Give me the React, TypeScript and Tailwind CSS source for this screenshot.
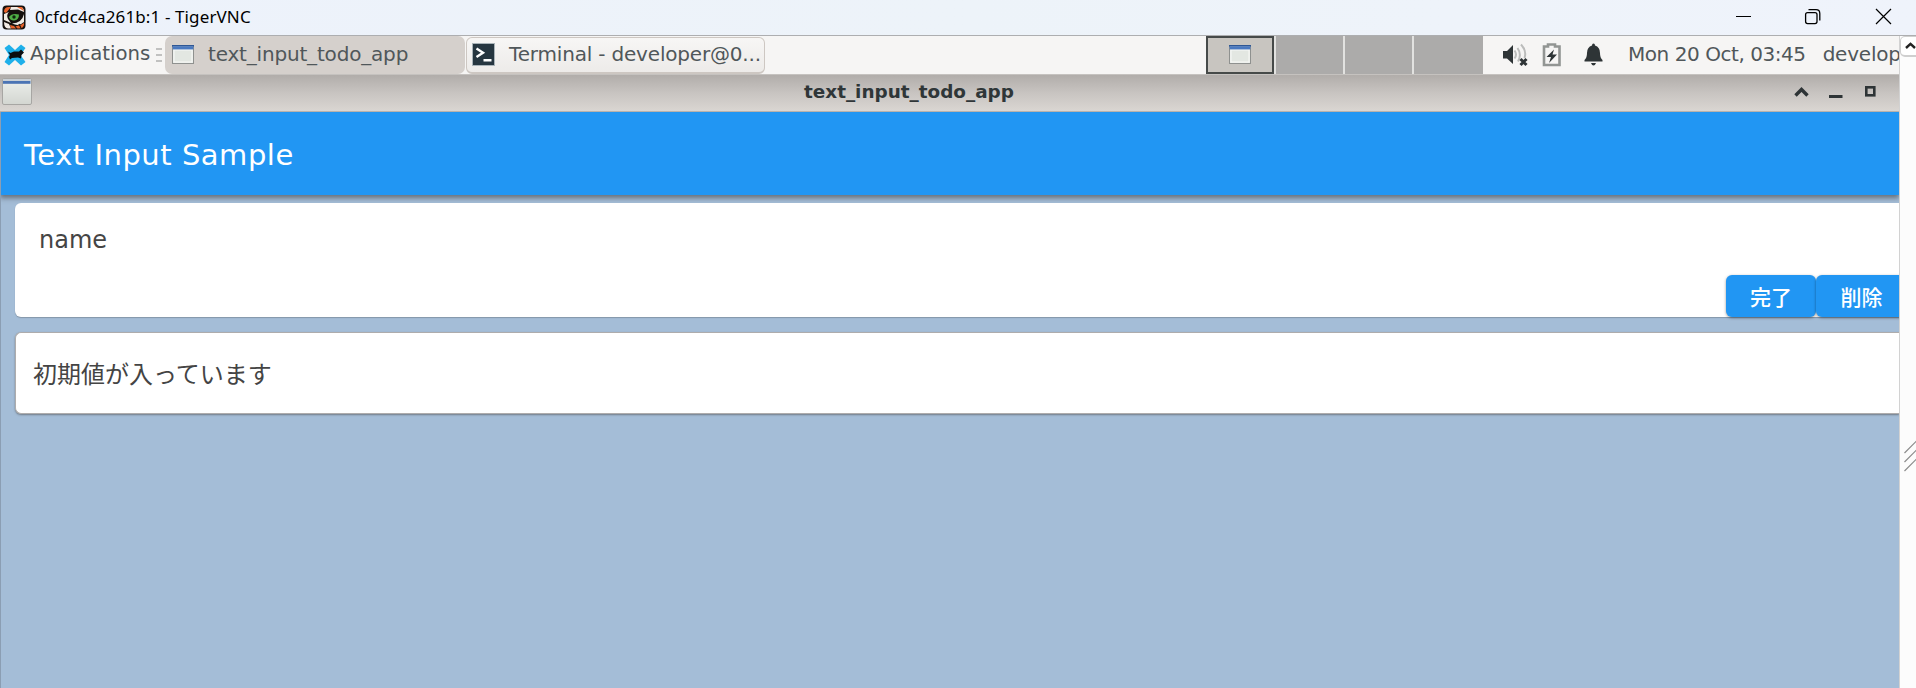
import React from 'react';

function WindowIcon({ className }: { className: string }) {
  return (
    <svg className={className} viewBox="0 0 22 19" preserveAspectRatio="none">
      <rect x="0.5" y="0.5" width="21" height="18" fill="#e6e9e5" stroke="#8f918f" />
      <rect x="2" y="5" width="18" height="12" fill="#e3e7e2" stroke="#f8f9f7" />
      <rect x="0" y="0" width="22" height="1.6" fill="#2e5795" />
      <rect x="0.6" y="1.4" width="20.8" height="3" fill="#4a79c0" />
    </svg>
  );
}

function LargeWindowIcon() {
  return (
    <svg className="mb-[3px] ml-[2px] h-[27px] w-[30px]" viewBox="0 0 30 27">
      <defs>
        <linearGradient id="pane" x1="0" y1="0" x2="0" y2="1">
          <stop offset="0" stopColor="#edf0ec" />
          <stop offset="1" stopColor="#d3d6d1" />
        </linearGradient>
      </defs>
      <rect x="0.5" y="0.5" width="29" height="26" rx="1.5" fill="url(#pane)" stroke="#a7a6a3" />
      <rect x="1" y="1" width="28" height="2" fill="#c9d0d6" />
      <rect x="1" y="3" width="27.5" height="2.8" fill="#4b74b4" />
    </svg>
  );
}

function TigerIcon() {
  return (
    <svg className="ml-[2px] h-[25px] w-6 shrink-0" viewBox="0 0 24 25">
      <rect x="0.5" y="0.5" width="23" height="24" rx="4" fill="#15100e" />
      <path d="M2 7 Q2 2 7 2 L9 2 L4 8Z" fill="#e8632c" />
      <path d="M9 2 H18 Q22 2 22 7 L16 4.500 L8 5Z" fill="#f3ece6" />
      <path d="M15 2 L20 2 L22 6Z" fill="#e8632c" />
      <path d="M2 9 L7 7 Q4 10 6 14 L9 18 L2 15Z" fill="#efebe4" />
      <path d="M22 9 Q20 18 10 18.500 Q17 22 22 17Z" fill="#efebe4" />
      <path d="M7 12 Q10 7.500 17 9.500 Q17 15 12 15.500 Q8 15.500 7 12Z" fill="#4fae45" />
      <circle cx="12" cy="12" r="1.7" fill="#10240f" />
      <path d="M8 20 Q16 23 22 18 L22 20 Q21 23.500 17 23.500 H9Z" fill="#e8632c" />
      <path d="M2 17 L7 19 L9 23.500 H6 Q2 23 2 17Z" fill="#f3ece6" />
      <path d="M12 20 L15 24 M17 19 L19 23" stroke="#1b1512" strokeWidth="1.200" />
    </svg>
  );
}

function XfceIcon() {
  return (
    <svg className="ml-[4px] h-[22px] w-[22px] shrink-0" viewBox="0 0 22 22">
      <path d="M0.5 4 L5 0.5 L11 6 L17 0.5 L21.5 4 L16.5 11 L21.5 18 L17 21.5 L11 16 L5 21.5 L0.5 18 L5 11Z" fill="#1fb0ea" />
      <path d="M4 7.500 L6.500 9 L10 7.500 L15 7.500 L17 5.500 L20 8.500 L17.500 11 L17 14.500 L14 13.500 L8 14 L6 15.500 L5 13 L6 11Z" fill="#0b0d0f" />
    </svg>
  );
}

function TerminalIcon() {
  return (
    <svg className="ml-[5px] h-[23px] w-[23px] shrink-0" viewBox="0 0 23 23">
      <rect x="0.5" y="0.5" width="22" height="22" fill="#263640" stroke="#a9b3b8" />
      <path d="M4.5 5.5 L11 9.8 L4.5 14" fill="none" stroke="#fff" strokeWidth="2.4" />
      <rect x="11.5" y="16" width="8" height="2.5" fill="#fff" />
    </svg>
  );
}

function TitleBar() {
  return (
    <header className="flex h-[35px] shrink-0 items-start bg-gradient-to-r from-[#edf2fb] via-[#edf3f9] to-[#eff3fb]">
      <div className="flex h-[35px] items-center pb-[1px]">
        <TigerIcon />
        <span className="ml-[9px] font-['Noto_Sans',sans-serif] text-[17px] tracking-[0.120px] text-black">
          0cfdc4ca261b:1 - TigerVNC
        </span>
      </div>
      <svg className="ml-auto mr-[24px] mt-[8px] h-[17px] w-[157px]" viewBox="0 0 157 17" fill="none" stroke="#000">
        <path d="M1 8.5 H16" />
        <rect x="70.6" y="4.6" width="11.4" height="11" rx="2" strokeWidth="1.3" />
        <path d="M73.5 1.7 H81 Q84.8 1.7 84.8 5.5 V12.5" strokeWidth="1.3" />
        <path d="M141 1 L156 16 M156 1 L141 16" strokeWidth="1.2" />
      </svg>
    </header>
  );
}

function Workspaces() {
  return (
    <div className="flex h-[38px] w-[277px] shrink-0 gap-[2px] bg-[#e2e2e0]">
      <div className="flex w-[68px] items-center justify-center border-2 border-[#464a49] bg-[#c8c5c0]">
        <WindowIcon className="mb-[2px] h-[19px] w-[22px]" />
      </div>
      <div className="w-[67px] bg-[#acabaa]" />
      <div className="w-[67px] bg-[#acabaa]" />
      <div className="flex-1 bg-[#acabaa]" />
    </div>
  );
}

function TrayIcons() {
  return (
    <svg className="ml-[20px] h-[25px] w-[102px] shrink-0" viewBox="0 0 102 25">
      <path d="M0 8 H4 L10 2 V21 L4 15.500 H0Z" fill="#2e3436" />
      <path d="M11.500 7.500 Q14.500 11.500 11.500 15.500 M14.500 5 Q19 11.500 15 18.500 M18 1.500 Q24 8 21.500 15" fill="none" stroke="#bbbcbb" strokeWidth="2" />
      <path d="M17.500 16 L23.500 22 M23.500 16 L17.500 22" stroke="#2e3436" strokeWidth="3" />
      <path d="M41 3.500 H45 V1.500 H52 V3.500 H56.500 V22 H41Z" fill="none" stroke="#929593" strokeWidth="2.600" />
      <path d="M51 6.500 L43.500 14 H48 L46 20 L54 11.500 H49.500Z" fill="#2e3436" />
      <path d="M90.500 0.500 Q92 0.500 92 2.500 Q97 4 97 10 Q97 15 99.500 17 V18.500 H81.500 V17 Q84 15 84 10 Q84 4 89 2.500 Q89 0.500 90.500 0.500Z M88 20 H93 Q92 22.500 90.500 22.500 Q89 22.500 88 20Z" fill="#2e3436" />
    </svg>
  );
}

function Panel() {
  return (
    <div className="flex h-[38px] shrink-0 items-center overflow-hidden whitespace-nowrap bg-[#f6f5f4] text-[20px] text-[#50575a]">
      <XfceIcon />
      <span className="ml-[4px] w-[125px] pb-[2px] text-[19.7px]">Applications</span>
      <svg className="mb-px ml-[1px] h-[16px] w-[6px] shrink-0" viewBox="0 0 6 16" stroke="#8b8d8c" strokeWidth="1.200">
        <path d="M0 2 H6 M0 8 H6 M0 14 H6" />
      </svg>
      <div className="ml-[3px] flex h-[38px] w-[300px] shrink-0 items-center rounded-[7px] bg-[#d5d0cc]">
        <WindowIcon className="mb-px ml-[7px] h-[19px] w-[22px] shrink-0" />
        <span className="ml-[14px] pb-[2px] tracking-[-0.18px]">text_input_todo_app</span>
      </div>
      <div className="ml-[1px] flex h-[37px] w-[299px] shrink-0 items-center rounded-[6px] border border-b-2 border-[#cdc7c2] bg-gradient-to-b from-[#f7f6f5] to-[#edebe9]">
        <TerminalIcon />
        <span className="ml-[14px] pb-[2px] tracking-[-0.18px]">Terminal - developer@0...</span>
      </div>
      <div className="ml-auto flex h-[38px] w-[693px] shrink-0 items-center">
        <Workspaces />
        <TrayIcons />
        <span className="ml-[23px] pb-[2px] tracking-[-0.45px]">Mon 20 Oct, 03:45</span>
        <span className="ml-[17px] pb-[2px] tracking-[-0.2px]">develop</span>
      </div>
    </div>
  );
}

function AppTitle() {
  return (
    <div className="flex h-[38px] shrink-0 items-center border-b border-t border-b-[#b9b2ac] border-t-[#c5c2bf] bg-gradient-to-b from-[#b1adaa] via-[#c8c4c1] to-[#dad6d2]">
      <div className="flex w-[804px] items-center">
        <LargeWindowIcon />
      </div>
      <span className="pb-[3px] text-[18.400px] font-bold text-[#2f3638]">text_input_todo_app</span>
      <svg className="mb-[2px] ml-auto mr-[22px] h-[14px] w-[84px]" viewBox="0 0 84 14" fill="none" stroke="#2e3436">
        <path d="M2.500 10.500 L8.500 4.500 L14.500 10.500" strokeWidth="3.400" />
        <path d="M36 11.500 H49.500" strokeWidth="3" />
        <rect x="73.300" y="2.300" width="8" height="8" strokeWidth="2.600" />
      </svg>
    </div>
  );
}

function TodoCard() {
  return (
    <section className="ml-[14px] mt-[8px] flex h-[114px] flex-col justify-between rounded-l-[6px] bg-white shadow-[0_1px_1px_rgba(60,60,60,0.3)]">
      <p className="ml-[24px] mt-[19px] text-[24px] leading-[36px] text-[#454545]">name</p>
      <div className="-mr-[8px] flex justify-end font-['Noto_Sans_CJK_JP',sans-serif] text-[21px] font-medium leading-[42px] text-white">
        <button className="h-[42px] w-[90px] rounded-[6px] bg-[#2196f3] shadow-[0_1px_3px_rgba(0,0,0,0.4)]">完了</button>
        <button className="h-[42px] w-[91px] rounded-[6px] bg-[#2196f3] shadow-[0_1px_3px_rgba(0,0,0,0.4)]">削除</button>
      </div>
    </section>
  );
}

function Desktop() {
  return (
    <div className="flex w-[1899px] shrink-0 flex-col overflow-hidden">
      <Panel />
      <AppTitle />
      <main className="flex flex-1 flex-col overflow-hidden border-l border-[#8b9eb3] bg-[#a4bdd7]">
        <div className="-ml-px flex h-[83px] shrink-0 items-center border-l border-[#1b7fd0] bg-[#2196f3] pl-[23px] shadow-[0_3px_5px_rgba(60,60,60,0.6)]">
          <h1 className="pt-[5px] text-[29px] tracking-[0.520px] text-white">Text Input Sample</h1>
        </div>
        <TodoCard />
        <div className="ml-[14px] mt-[15px] flex h-[82px] shrink-0 items-center rounded-l-[6px] border border-r-0 border-[#aeacac] bg-white pl-[17px] shadow-[0_1px_2px_rgba(70,70,70,0.55)]">
          <p className="pb-px font-['Noto_Sans_CJK_JP',sans-serif] text-[24px] font-normal text-[#444]">初期値が入っています</p>
        </div>
      </main>
    </div>
  );
}

function SideStrip() {
  return (
    <aside className="flex flex-1 flex-col overflow-hidden border-l border-[#d2d2d2] bg-[#fcfcfc]">
      <div className="flex h-[21px] w-[24px] shrink-0 items-center rounded-[5px] border border-b-2 border-[#cfcfcf] bg-white pb-[2px] pl-[4px]">
        <svg className="h-[7px] w-[11px] shrink-0" viewBox="0 0 11 7" fill="none" stroke="#222" strokeWidth="2.400">
          <path d="M1 6 L5.500 1.800 L10 6" />
        </svg>
      </div>
      <svg className="ml-[4px] mt-[383px] h-[33px] w-[13px] shrink-0" viewBox="0 0 13 33" stroke="#8c8c8c" strokeWidth="1.200">
        <path d="M0.500 13 L13 0.500 M0.500 22 L13 9.500 M0.500 31 L13 18.500" />
      </svg>
    </aside>
  );
}

export default function App() {
  return (
    <div className="flex h-[688px] w-[1916px] flex-col overflow-hidden font-['DejaVu_Sans',sans-serif]">
      <TitleBar />
      <div className="flex min-h-0 flex-1 border-t border-[#adaeb0]">
        <Desktop />
        <SideStrip />
      </div>
    </div>
  );
}
